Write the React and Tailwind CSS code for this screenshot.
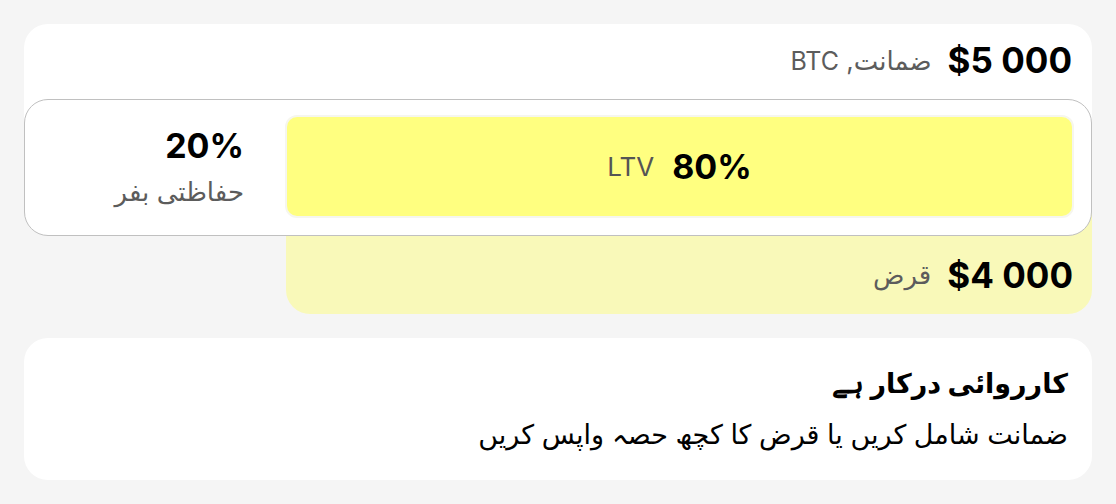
import React from "react";

export default function App() {
  return (
    <div
      dir="rtl"
      className="w-[1116px] h-[504px] bg-[#f5f5f5] p-6 flex flex-col gap-6"
      style={{ fontFamily: 'Inter, "DejaVu Sans", "Noto Sans", sans-serif' }}
    >
      <div className="flex flex-col">
        <div className="bg-white rounded-t-[24px] h-[75px] pr-5 pb-[2px] flex items-center gap-4">
          <span dir="ltr" className="text-[35px] font-bold text-black leading-none">$5 000</span>
          <span className="text-[26px] text-[#5c5c5c] leading-none">
            ضمانت, <span dir="ltr" className="text-[25px]">BTC</span>
          </span>
        </div>
        <div className="grid">
          <div className="col-start-1 row-start-1 flex flex-col">
            <div className="h-1/2 bg-white" />
            <div className="flex-1 flex">
              <div className="w-[806px] bg-[#f9f9b9]" />
            </div>
          </div>
          <div className="col-start-1 row-start-1 z-10 h-[137px] bg-white border-[1.5px] border-[#c0c0c0] rounded-[24px] flex items-stretch pr-[17px] pt-[15px] pb-[17px] gap-[41px]">
            <div className="w-[789px] rounded-[12px] bg-[#ffff80] border-2 border-[#f6f6ee] flex items-center justify-center gap-[18px]">
              <span dir="ltr" className="text-[34px] font-bold text-black leading-none">80%</span>
              <span className="text-[26px] text-[#555] leading-none">LTV</span>
            </div>
            <div className="flex flex-col items-start justify-center gap-[16px]">
              <span dir="ltr" className="text-[34px] font-bold text-black leading-none">20%</span>
              <span className="text-[26px] text-[#5c5c5c] leading-none">حفاظتی بفر</span>
            </div>
          </div>
        </div>
        <div className="w-[806px] h-[78px] bg-[#f9f9b9] rounded-b-[24px] flex items-center gap-4 pr-[19px]">
          <span dir="ltr" className="text-[35px] font-bold text-black leading-none">$4 000</span>
          <span className="text-[26px] text-[#5c5c5c] leading-none">قرض</span>
        </div>
      </div>
      <div className="bg-white rounded-[24px] h-[142px] pr-6 flex flex-col justify-center gap-[24px]">
        <span className="text-[27px] font-bold text-black leading-none">کارروائی درکار ہے</span>
        <span className="text-[27px] text-black leading-none">ضمانت شامل کریں یا قرض کا کچھ حصہ واپس کریں</span>
      </div>
    </div>
  );
}
